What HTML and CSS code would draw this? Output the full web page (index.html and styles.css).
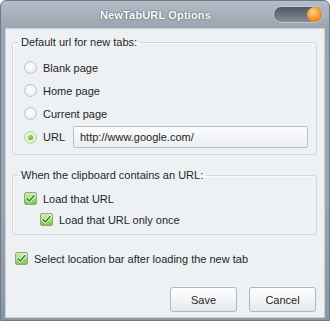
FILE: index.html
```html
<!DOCTYPE html>
<html>
<head>
<meta charset="utf-8">
<link rel="stylesheet" href="styles.css">
</head>
<body>
<div class="window">
  <div class="titlebar">
    <span class="title">NewTabURL Options</span>
    <span class="close"><span class="close-dot"></span></span>
  </div>
  <div class="client">
    <fieldset class="group g1">
      <legend>Default url for new tabs:</legend>
      <div class="row"><span class="radio"></span><span>Blank page</span></div>
      <div class="row"><span class="radio"></span><span>Home page</span></div>
      <div class="row"><span class="radio"></span><span>Current page</span></div>
      <div class="row url-row"><span class="radio on"></span><span>URL</span><div class="input">http://www.google.com/</div></div>
    </fieldset>
    <fieldset class="group g2">
      <legend>When the clipboard contains an URL:</legend>
      <div class="row crow"><span class="check"><svg viewBox="0 0 11 11" width="11" height="11"><path d="M2 5.5l2.3 2.4L9 2.6" stroke="#fff" stroke-width="3" fill="none" stroke-linecap="round" stroke-linejoin="round"/><path d="M2 5.5l2.3 2.4L9 2.6" stroke="#2f7f1c" stroke-width="1.5" fill="none" stroke-linecap="round" stroke-linejoin="round"/></svg></span><span>Load that URL</span></div>
      <div class="row crow indent"><span class="check"><svg viewBox="0 0 11 11" width="11" height="11"><path d="M2 5.5l2.3 2.4L9 2.6" stroke="#fff" stroke-width="3" fill="none" stroke-linecap="round" stroke-linejoin="round"/><path d="M2 5.5l2.3 2.4L9 2.6" stroke="#2f7f1c" stroke-width="1.5" fill="none" stroke-linecap="round" stroke-linejoin="round"/></svg></span><span>Load that URL only once</span></div>
    </fieldset>
    <div class="row crow select"><span class="check"><svg viewBox="0 0 11 11" width="11" height="11"><path d="M2 5.5l2.3 2.4L9 2.6" stroke="#fff" stroke-width="3" fill="none" stroke-linecap="round" stroke-linejoin="round"/><path d="M2 5.5l2.3 2.4L9 2.6" stroke="#2f7f1c" stroke-width="1.5" fill="none" stroke-linecap="round" stroke-linejoin="round"/></svg></span><span>Select location bar after loading the new tab</span></div>
    <div class="buttons">
      <button class="btn">Save</button>
      <button class="btn">Cancel</button>
    </div>
  </div>
</div>
</body>
</html>
```
FILE: styles.css
```css
html, body {
  margin: 0;
  padding: 0;
  background: #ffffff;
}
body {
  font-family: "Liberation Sans", Arial, sans-serif;
  font-size: 11px;
  color: #1f1f1f;
}
.window {
  width: 330px;
  height: 321px;
  box-sizing: border-box;
  display: flex;
  flex-direction: column;
  background: linear-gradient(#b4bdc7 0px, #98a4b0 28px, #9ba6b1 60%, #8a96a2 100%);
  border: 1px solid #6f7b87;
  border-radius: 6px 6px 0 0;
  padding: 0 4px 2px 4px;
}
.titlebar {
  height: 27px;
  display: flex;
  align-items: center;
  flex: none;
}
.title {
  margin-left: 95px;
  font-weight: bold;
  font-size: 11px;
  letter-spacing: 0.15px;
  color: #ffffff;
  text-shadow: 0 0 2px #55616d, 0 0 1px #55616d;
}
.close {
  margin-left: auto;
  margin-right: 2px;
  margin-top: -1px;
  width: 50px;
  height: 17px;
  box-sizing: border-box;
  border-radius: 9px;
  border: 1px solid #c3cad1;
  background: linear-gradient(#4e5964, #6d7883 60%, #838e99);
  display: flex;
  align-items: center;
  justify-content: flex-end;
  padding-right: 0;
}
.close-dot {
  width: 15px;
  height: 15px;
  border-radius: 50%;
  background: radial-gradient(circle at 42% 35%, #ffd9a0 0%, #f89a35 45%, #e0700f 100%);
}
.client {
  flex: 1;
  display: flex;
  flex-direction: column;
  background: #eef1f4;
  border: 1px solid #c9d0d7;
  padding: 6px 0 5px 0;
}
.group {
  margin: 0 7px 0 6px;
  padding: 7px 8px 5px 5px;
  border: 1px solid #d2d8de;
  border-radius: 3px;
  box-shadow: inset 1px 1px 0 #fafbfc;
}
.group legend {
  padding: 0 3px;
  line-height: 14px;
}
.g2 {
  margin-top: 13px;
  padding-top: 6px;
  padding-bottom: 4px;
}
.row {
  display: flex;
  align-items: center;
  height: 23px;
  padding-left: 6px;
}
.url-row {
  height: 24px;
}
.crow {
  height: 21px;
}
.indent {
  padding-left: 22px;
}
.select {
  margin-top: 13px;
  padding-left: 9px;
}
.radio {
  width: 13px;
  height: 13px;
  box-sizing: border-box;
  border-radius: 50%;
  border: 1px solid #bcc3cb;
  background: radial-gradient(circle at 45% 40%, #ffffff 0%, #f1f3f5 50%, #dde2e7 100%);
  margin-right: 6px;
  flex: none;
  display: flex;
  align-items: center;
  justify-content: center;
}
.radio.on {
  border-color: #b6d7a2;
  background: radial-gradient(circle at 45% 40%, #f4fbef 0%, #dcefce 60%, #c5e3b0 100%);
}
.radio.on::after {
  content: "";
  width: 5px;
  height: 5px;
  border-radius: 50%;
  background: radial-gradient(circle at 40% 35%, #9ad86a, #4ea526);
}
.check {
  width: 13px;
  height: 13px;
  box-sizing: border-box;
  border: 1px solid #8bac78;
  border-radius: 2px;
  background: linear-gradient(#d3eeb9, #9fd676 55%, #7fc655);
  margin-right: 6px;
  flex: none;
  display: flex;
  align-items: center;
  justify-content: center;
}
.input {
  margin-left: auto;
  width: 235px;
  height: 22px;
  box-sizing: border-box;
  border: 1px solid #b9c0c7;
  border-radius: 2px;
  background: linear-gradient(#fbfbfc, #eceff2);
  padding-left: 6px;
  display: flex;
  align-items: center;
}
.buttons {
  margin-top: auto;
  display: flex;
  justify-content: flex-end;
  gap: 12px;
  padding-right: 8px;
}
.btn {
  width: 67px;
  height: 25px;
  box-sizing: border-box;
  font-family: "Liberation Sans", Arial, sans-serif;
  font-size: 11px;
  color: #1f1f1f;
  border: 1px solid #aeb6be;
  border-radius: 3px;
  background: linear-gradient(#ffffff, #f3f5f7 50%, #e4e8ec);
  padding: 0;
}
```
